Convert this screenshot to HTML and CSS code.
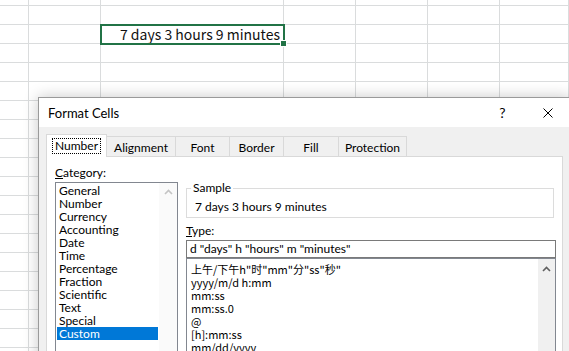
FILE: index.html
```html
<!DOCTYPE html>
<html lang="en">

<head>
   <meta charset="UTF-8">
   <title>Format Cells</title>
   <link rel="stylesheet" href="styles.css">
</head>

<body>
   <div class="sheet">
      <div class="row top"><i></i><i></i><i></i><i></i><i></i><i></i><i></i></div>
      <div class="row"><i></i><i></i><i></i><i></i><i></i><i></i><i></i></div>
      <div class="row"><i></i><i></i><i class="selected">7 days 3 hours 9 minutes</i><i></i><i></i><i></i><i></i></div>
      <div class="row"><i></i><i></i><i></i><i></i><i></i><i></i><i></i></div>
      <div class="row"><i></i><i></i><i></i><i></i><i></i><i></i><i></i></div>
      <div class="row"><i></i><i></i><i></i><i></i><i></i><i></i><i></i></div>
      <div class="row"><i></i><i></i><i></i><i></i><i></i><i></i><i></i></div>
      <div class="row"><i></i><i></i><i></i><i></i><i></i><i></i><i></i></div>
      <div class="row"><i></i><i></i><i></i><i></i><i></i><i></i><i></i></div>
      <div class="row"><i></i><i></i><i></i><i></i><i></i><i></i><i></i></div>
      <div class="row"><i></i><i></i><i></i><i></i><i></i><i></i><i></i></div>
      <div class="row"><i></i><i></i><i></i><i></i><i></i><i></i><i></i></div>
      <div class="row"><i></i><i></i><i></i><i></i><i></i><i></i><i></i></div>
      <div class="row"><i></i><i></i><i></i><i></i><i></i><i></i><i></i></div>
      <div class="row"><i></i><i></i><i></i><i></i><i></i><i></i><i></i></div>
      <div class="row"><i></i><i></i><i></i><i></i><i></i><i></i><i></i></div>
      <div class="row"><i></i><i></i><i></i><i></i><i></i><i></i><i></i></div>
      <div class="row"><i></i><i></i><i></i><i></i><i></i><i></i><i></i></div>
      <div class="row"><i></i><i></i><i></i><i></i><i></i><i></i><i></i></div>
      <div class="row"><i></i><i></i><i></i><i></i><i></i><i></i><i></i></div>
   </div>

   <div class="dialog">
      <div class="titlebar">
         <span class="title">Format Cells</span>
         <div class="title-buttons">
            <span class="title-btn help">?</span>
            <span class="title-btn">
               <svg width="10" height="10" viewBox="0 0 10 10">
                  <path d="M0.5 0.5 L9.5 9.5 M9.5 0.5 L0.5 9.5" stroke="#000" stroke-width="1" fill="none" />
               </svg>
            </span>
         </div>
      </div>

      <div class="dialog-body">
         <div class="tabs">
            <div class="tab active"><span class="focus">Number</span></div>
            <div class="tab">Alignment</div>
            <div class="tab">Font</div>
            <div class="tab">Border</div>
            <div class="tab">Fill</div>
            <div class="tab">Protection</div>
         </div>

         <div class="panel">
            <div class="category">
               <div class="label"><u>C</u>ategory:</div>
               <div class="listbox">
                  <ul class="items">
                     <li>General</li>
                     <li>Number</li>
                     <li>Currency</li>
                     <li>Accounting</li>
                     <li>Date</li>
                     <li>Time</li>
                     <li>Percentage</li>
                     <li>Fraction</li>
                     <li>Scientific</li>
                     <li>Text</li>
                     <li>Special</li>
                     <li class="current">Custom</li>
                  </ul>
                  <div class="scrollbar disabled">
                     <svg width="9" height="6" viewBox="0 0 9 6">
                        <path d="M1 5 L4.5 1.5 L8 5" stroke="currentColor" stroke-width="1.6" fill="none" />
                     </svg>
                  </div>
               </div>
            </div>

            <div class="format">
               <fieldset class="sample">
                  <legend>Sample</legend>
                  <div class="sample-text">7 days 3 hours 9 minutes</div>
               </fieldset>

               <div class="label type-label"><u>T</u>ype:</div>
               <div class="type-input">d "days" h "hours" m "minutes"</div>

               <div class="listbox type-list">
                  <ul class="items">
                     <li>上午/下午h"时"mm"分"ss"秒"</li>
                     <li>yyyy/m/d h:mm</li>
                     <li>mm:ss</li>
                     <li>mm:ss.0</li>
                     <li>@</li>
                     <li>[h]:mm:ss</li>
                     <li>mm/dd/yyyy</li>
                  </ul>
                  <div class="scrollbar">
                     <svg width="9" height="6" viewBox="0 0 9 6">
                        <path d="M1 5 L4.5 1.5 L8 5" stroke="currentColor" stroke-width="1.6" fill="none" />
                     </svg>
                  </div>
               </div>
            </div>
         </div>
      </div>
   </div>
</body>

</html>
```

FILE: styles.css
```css
body {
   margin: 0;
   height: 351px;
   overflow: hidden;
   position: relative;
   background-color: #fff;
   font-family: Lato, "Noto Sans", sans-serif;
   font-size: 12px;
   color: #000;
}

/* spreadsheet grid */
.row {
   display: grid;
   grid-template-columns: 29px 72px 183px 72px 72px 72px 1fr;
   height: 19px;
}

.row.top {
   height: 6px;
}

.row i {
   display: block;
   box-sizing: border-box;
   border-right: 1px solid #dadcdd;
   border-bottom: 1px solid #dadcdd;
   font-style: normal;
}

.row .selected {
   position: relative;
   text-align: right;
   padding-right: 3px;
   font-family: "Noto Sans CJK SC", sans-serif;
   font-size: 14px;
   line-height: 18px;
   color: #111;
   outline: 2px solid #217346;
   outline-offset: -1px;
}

/* fill handle */
.row .selected::after {
   content: "";
   position: absolute;
   right: -4px;
   bottom: -4px;
   width: 7px;
   height: 7px;
   box-sizing: border-box;
   background-color: #217346;
   border: 1px solid #fff;
}

/* dialog */
.dialog {
   position: absolute;
   left: 38px;
   top: 97px;
   width: 533px;
   height: 280px;
   box-sizing: border-box;
   border: 1px solid #9a9a9a;
   background-color: #f0f0f0;
   box-shadow: 0 0 14px rgba(0, 0, 0, 0.22);
   display: flex;
   flex-direction: column;
}

.titlebar {
   flex-shrink: 0;
   height: 29px;
   background-color: #fff;
   display: flex;
   align-items: center;
   justify-content: space-between;
   padding-left: 9px;
}

.title {
   font-size: 13px;
}

.title-buttons {
   display: flex;
   height: 100%;
}

.title-btn {
   width: 45px;
   display: flex;
   align-items: center;
   justify-content: center;
}

.help {
   font-size: 14px;
}

.dialog-body {
   flex: 1;
   min-height: 0;
   display: flex;
   flex-direction: column;
   padding: 7px 7px 0 7px;
}

.tabs {
   flex-shrink: 0;
   display: flex;
   align-items: flex-end;
   height: 22px;
}

.tab {
   box-sizing: border-box;
   height: 20px;
   margin-left: -1px;
   border: 1px solid #d9d9d9;
   border-bottom: none;
   background-color: #f0f0f0;
   display: flex;
   align-items: center;
   justify-content: center;
   padding-top: 1px;
}

.tab:nth-child(2) { width: 70px; }
.tab:nth-child(3) { width: 55px; }
.tab:nth-child(4) { width: 55px; }
.tab:nth-child(5) { width: 56px; }
.tab:nth-child(6) { width: 69px; }

.tab.active {
   position: relative;
   z-index: 1;
   width: 61px;
   height: 23px;
   margin-left: 0;
   margin-bottom: -1px;
   background-color: #fff;
   padding-top: 0;
   padding-bottom: 1px;
}

.focus {
   outline: 1px dotted #000;
   padding: 0 2px;
   line-height: 14px;
}

.panel {
   flex: 1;
   display: flex;
   align-items: flex-start;
   padding: 8px 6px 0 8px;
   background-color: #fff;
   border: 1px solid #d9d9d9;
}

.label {
   line-height: 16px;
   margin-bottom: 1px;
}

.listbox {
   display: flex;
   box-sizing: border-box;
   border: 1px solid #828790;
   background-color: #fff;
}

.category .listbox {
   width: 123px;
   height: 200px;
}

.items {
   list-style: none;
   margin: 0;
   padding: 1px;
   flex: 1;
}

.items li {
   line-height: 13px;
   padding-left: 2px;
   white-space: nowrap;
}

.items li.current {
   background-color: #0078d7;
   color: #fff;
}

.scrollbar {
   width: 17px;
   background-color: #f0f0f0;
   color: #606060;
   display: flex;
   justify-content: center;
   padding-top: 7px;
   box-sizing: border-box;
}

.scrollbar.disabled {
   width: 18px;
   background-color: #fafafa;
   color: #c4c4c4;
   padding-top: 6px;
}

.format {
   flex: 1;
   margin-left: 8px;
   margin-top: 15px;
}

.sample {
   margin: 0 2px 0 0;
   padding: 0 4px 2px 4px;
   border: 1px solid #dcdcdc;
   min-width: 0;
}

.sample legend {
   padding: 0 2px;
   line-height: 16px;
}

.sample-text {
   line-height: 16px;
   margin-top: 3px;
   padding-left: 4px;
}

.type-label {
   margin-top: 5px;
}

.type-input {
   box-sizing: border-box;
   height: 18px;
   border: 1px solid #7a7a7a;
   padding-left: 3px;
   line-height: 16px;
   white-space: nowrap;
}

.type-list {
   height: 120px;
}

.type-list .items {
   padding: 4px 1px 0 2px;
   font-family: "Noto Sans CJK SC", sans-serif;
   font-size: 11px;
}
```
